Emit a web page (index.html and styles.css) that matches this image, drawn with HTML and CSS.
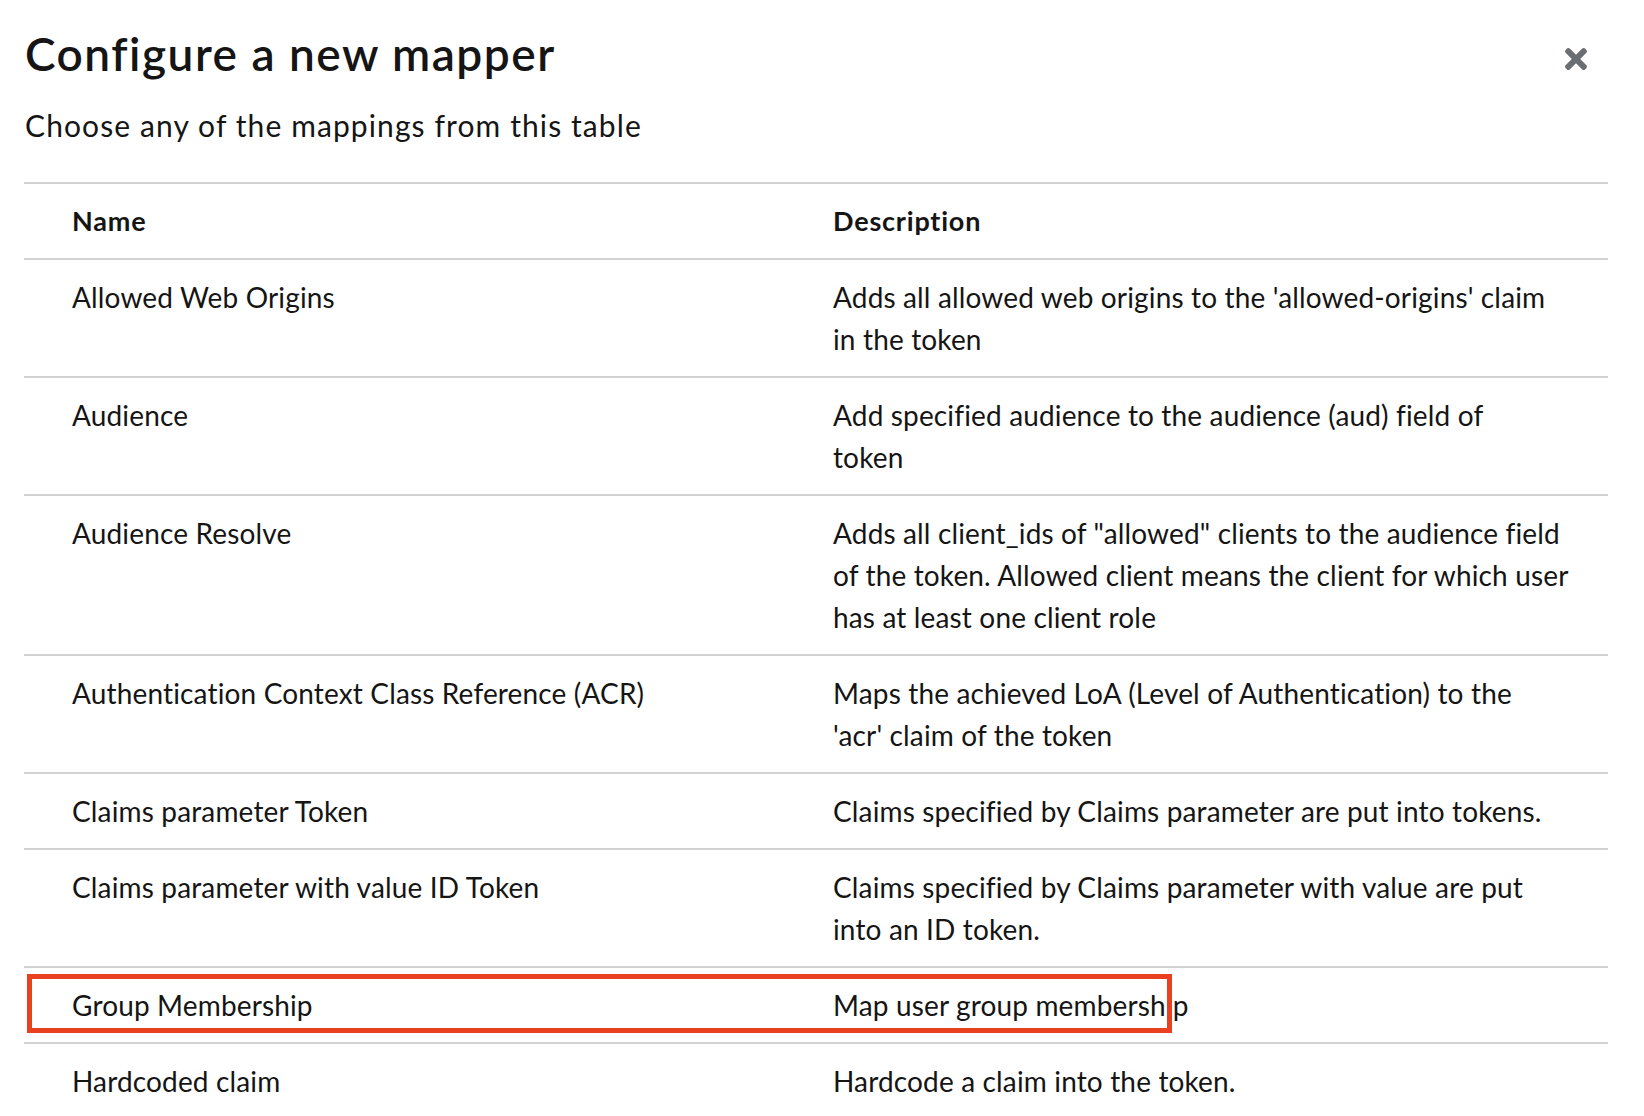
FILE: index.html
```html
<!DOCTYPE html>
<html lang="en">
<head>
<meta charset="utf-8">
<title>Configure a new mapper</title>
<link rel="stylesheet" href="styles.css">
</head>
<body>
<div class="modal">
  <header class="modal-header">
    <div class="heading">
      <h1 class="title">Configure a new mapper</h1>
      <p class="subtitle">Choose any of the mappings from this table</p>
    </div>
    <button class="close" aria-label="Close">
      <svg viewBox="0 80 352 352" width="22" height="22" aria-hidden="true"><path fill="currentColor" d="M242.72 256l100.07-100.07c12.28-12.28 12.28-32.19 0-44.48l-22.24-22.24c-12.28-12.28-32.19-12.28-44.48 0L176 189.280 75.93 89.21c-12.28-12.28-32.19-12.28-44.48 0L9.21 111.45c-12.28 12.28-12.28 32.19 0 44.48L109.28 256 9.21 356.07c-12.28 12.28-12.28 32.19 0 44.48l22.24 22.24c12.28 12.28 32.2 12.28 44.48 0L176 322.72l100.07 100.07c12.28 12.28 32.2 12.28 44.48 0l22.24-22.24c12.28-12.28 12.28-32.19 0-44.48L242.72 256z"/></svg>
    </button>
  </header>
  <table class="table">
    <colgroup><col class="col-name"><col class="col-desc"></colgroup>
    <thead>
      <tr><th class="cell-name">Name</th><th class="cell-desc">Description</th></tr>
    </thead>
    <tbody>
      <tr><td class="cell-name">Allowed Web Origins</td><td class="cell-desc">Adds all allowed web origins to the 'allowed-origins' claim<br>in the token</td></tr>
      <tr><td class="cell-name">Audience</td><td class="cell-desc">Add specified audience to the audience (aud) field of<br>token</td></tr>
      <tr><td class="cell-name">Audience Resolve</td><td class="cell-desc">Adds all client_ids of "allowed" clients to the audience field<br>of the token. Allowed client means the client for which user<br>has at least one client role</td></tr>
      <tr><td class="cell-name">Authentication Context Class Reference (ACR)</td><td class="cell-desc">Maps the achieved LoA (Level of Authentication) to the<br>'acr' claim of the token</td></tr>
      <tr><td class="cell-name">Claims parameter Token</td><td class="cell-desc">Claims specified by Claims parameter are put into tokens.</td></tr>
      <tr><td class="cell-name">Claims parameter with value ID Token</td><td class="cell-desc">Claims specified by Claims parameter with value are put<br>into an ID token.</td></tr>
      <tr><td class="cell-name">Group Membership</td><td class="cell-desc">Map user group membership</td></tr>
      <tr><td class="cell-name">Hardcoded claim</td><td class="cell-desc">Hardcode a claim into the token.</td></tr>
    </tbody>
  </table>
  <div class="highlight" aria-hidden="true"></div>
</div>
</body>
</html>
```

FILE: styles.css
```css
html, body {
  margin: 0;
  padding: 0;
  background: #ffffff;
}

body {
  font-family: Lato, "Noto Sans", sans-serif;
  color: #151515;
  overflow: hidden;
}

.modal {
  position: relative;
  padding: 0 36px 0 24px;
}

.modal-header {
  display: flex;
  justify-content: space-between;
  align-items: flex-start;
}

.title {
  margin: 28px 0 0 1px;
  font-size: 46px;
  line-height: 52px;
  font-weight: 600;
  letter-spacing: 1.5px;
}

.subtitle {
  margin: 24px 0 0 1px;
  font-size: 30px;
  line-height: 42px;
  letter-spacing: 1.1px;
}

.close {
  margin: 48px 21px 0 0;
  padding: 0;
  border: 0;
  background: none;
  color: #6a6e73;
  width: 22px;
  height: 22px;
  display: flex;
}

.table {
  margin-top: 36px;
  width: 100%;
  border-collapse: collapse;
  table-layout: fixed;
  border-top: 2px solid #d2d2d2;
}

.col-name { width: 777px; }

.table th,
.table td {
  text-align: left;
  vertical-align: top;
  padding: 16px 0;
  line-height: 42px;
  border-bottom: 2px solid #d2d2d2;
}

.table th {
  font-size: 27px;
  font-weight: 700;
  letter-spacing: 0.8px;
}

.table td {
  font-size: 28px;
  font-weight: 400;
  letter-spacing: 0.15px;
}

.cell-name { padding-left: 48px !important; }
.cell-desc {
  padding-left: 32px !important;
  padding-right: 16px !important;
  white-space: nowrap;
}

.highlight {
  position: absolute;
  left: 27px;
  top: 974px;
  width: 1135px;
  height: 49px;
  border: 5px solid #e9411f;
}
```
